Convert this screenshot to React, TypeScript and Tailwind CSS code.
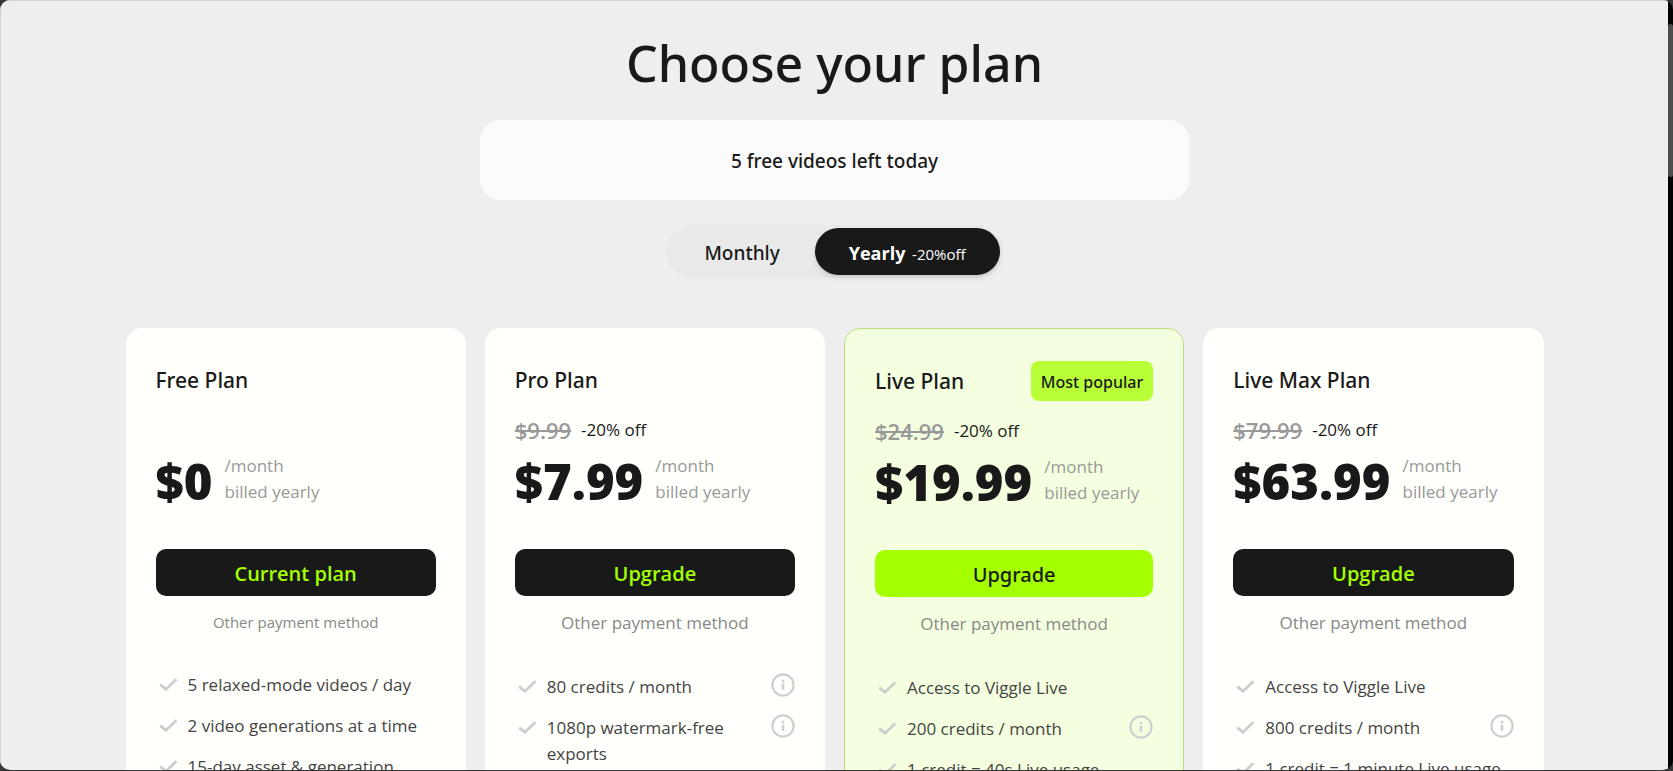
import { useState } from "react";
import { clsx } from "clsx";

type Feature = { text: string; info?: boolean };

type Plan = {
  name: string;
  oldPrice?: string;
  price: string;
  cta: string;
  popular?: boolean;
  smallNote?: boolean;
  features: Feature[];
};

const plans: Plan[] = [
  {
    name: "Free Plan",
    price: "$0",
    cta: "Current plan",
    smallNote: true,
    features: [
      { text: "5 relaxed-mode videos / day" },
      { text: "2 video generations at a time" },
      { text: "15-day asset & generation" },
    ],
  },
  {
    name: "Pro Plan",
    oldPrice: "$9.99",
    price: "$7.99",
    cta: "Upgrade",
    features: [
      { text: "80 credits / month", info: true },
      { text: "1080p watermark-free exports", info: true },
    ],
  },
  {
    name: "Live Plan",
    oldPrice: "$24.99",
    price: "$19.99",
    cta: "Upgrade",
    popular: true,
    features: [
      { text: "Access to Viggle Live" },
      { text: "200 credits / month", info: true },
      { text: "1 credit = 40s Live usage" },
    ],
  },
  {
    name: "Live Max Plan",
    oldPrice: "$79.99",
    price: "$63.99",
    cta: "Upgrade",
    features: [
      { text: "Access to Viggle Live" },
      { text: "800 credits / month", info: true },
      { text: "1 credit = 1 minute Live usage" },
    ],
  },
];

function CheckIcon() {
  return (
    <svg viewBox="0 0 24 24" className="h-6 w-6 shrink-0 text-[#cdcdcd]" fill="none" stroke="currentColor" strokeWidth="2.8" aria-hidden="true">
      <path d="M4.2 12.6 L10 17.2 L20.4 7.2" />
    </svg>
  );
}

function InfoIcon() {
  return (
    <svg viewBox="0 0 24 24" className="h-6 w-6" fill="none" stroke="currentColor" strokeWidth="2.2" aria-hidden="true">
      <circle cx="12" cy="12" r="10.6" />
      <path d="M12 10.6 V16.8" strokeWidth="2.6" />
      <path d="M12 6.8 V9.2" strokeWidth="2.6" />
    </svg>
  );
}

function PlanCard({ plan }: { plan: Plan }) {
  return (
    <article
      className={clsx(
        "rounded-2xl px-[30px] pt-8 pb-10",
        plan.popular ? "border border-[#b9e07c] bg-[#f4ffe0]" : "bg-[#fffffb]",
      )}
    >
      <div className="flex h-10 items-center justify-between">
        <h2 className="pt-0.5 font-['Noto_Sans','Open_Sans',sans-serif] text-[21px] font-medium">{plan.name}</h2>
        {plan.popular && (
          <span className="flex h-10 items-center rounded-lg bg-[#b8ff38] px-2.5 pt-0.5 font-['Noto_Sans','Open_Sans',sans-serif] text-[16px] font-medium whitespace-nowrap">
            Most popular
          </span>
        )}
      </div>

      <div className="mt-4 flex h-7 items-center gap-2.5">
        {plan.oldPrice && (
          <>
            <s className="text-[22px] font-semibold text-[#999999]">{plan.oldPrice}</s>
            <span className="text-[17px]">-20% off</span>
          </>
        )}
      </div>

      <div className="mt-2 flex gap-3">
        <p className="text-[49px] leading-[58px] font-extrabold">{plan.price}</p>
        <p className="pt-px text-[17px] leading-[26px] whitespace-nowrap text-[#999999]">
          /month
          <br />
          billed yearly
        </p>
      </div>

      <button
        type="button"
        className={clsx(
          "mt-[39px] h-[47px] w-full rounded-[10px] pt-0.5 text-[20px]",
          plan.popular
            ? "bg-[#a4ff00] font-['Noto_Sans','Open_Sans',sans-serif] font-medium"
            : "bg-[#191919] font-semibold text-[#a4ff00]",
        )}
      >
        {plan.cta}
      </button>
      <a
        href="#payment"
        className={clsx(
          "mt-3.5 block text-center text-[#888888]",
          plan.smallNote ? "text-[15px] leading-6" : "text-[17px] leading-[26px]",
        )}
      >
        Other payment method
      </a>

      <ul className="mt-[38px] grid gap-[15px]">
        {plan.features.map((feature) => (
          <li key={feature.text} className="flex gap-2 text-[17px] leading-[26px] text-[#444444]">
            <CheckIcon />
            <span className="flex-1">{feature.text}</span>
            {feature.info && (
              <button type="button" aria-label={`About ${feature.text}`} className="-mt-px ml-8 h-6 w-6 text-[#cfcfcf]">
                <InfoIcon />
              </button>
            )}
          </li>
        ))}
      </ul>
    </article>
  );
}

export default function App() {
  const [billing, setBilling] = useState("yearly");

  return (
    <div className="h-screen overflow-hidden bg-[#363638] pb-px font-['Open_Sans','Noto_Sans',sans-serif] text-[#191919]">
      <div className="flex h-full overflow-hidden rounded-[10px] bg-black">
        <main className="h-full flex-1 overflow-hidden border-t border-l border-[#d2d2d2] bg-[#eeeeee]">
          <h1 className="mt-[31px] text-center font-['Noto_Sans','Open_Sans',sans-serif] text-[50px] leading-[63px] font-medium">
            Choose your plan
          </h1>

          <p className="mx-auto mt-[25px] w-full max-w-[709px] rounded-[20px] bg-[#fbfbfb] pt-0.5 text-center font-['Noto_Sans','Open_Sans',sans-serif] text-[19px] leading-[78px] font-medium">
            5 free videos left today
          </p>

          <div className="mx-auto mt-[25px] flex w-fit rounded-full bg-[#e9e9e9] p-[3px]">
            <button
              type="button"
              aria-pressed={billing === "monthly"}
              onClick={() => setBilling("monthly")}
              className="h-[47px] rounded-full px-[35px] pt-[3px] font-['Noto_Sans','Open_Sans',sans-serif] text-[19px] font-medium"
            >
              Monthly
            </button>
            <button
              type="button"
              aria-pressed={billing === "yearly"}
              onClick={() => setBilling("yearly")}
              className="h-[47px] rounded-full bg-[#191919] px-[34px] pt-[3px] text-[18px] font-bold text-white shadow-md"
            >
              Yearly <span className="ml-0.5 text-[15px] font-normal">-20%off</span>
            </button>
          </div>

          <section className="mx-auto mt-[50px] grid max-w-[1418px] grid-cols-4 gap-[19px]">
            {plans.map((plan) => (
              <PlanCard key={plan.name} plan={plan} />
            ))}
          </section>
        </main>
        <div className="w-[5px] pt-6">
          <div className="h-[153px] rounded-sm bg-[#4d4d4d]" />
        </div>
      </div>
    </div>
  );
}
